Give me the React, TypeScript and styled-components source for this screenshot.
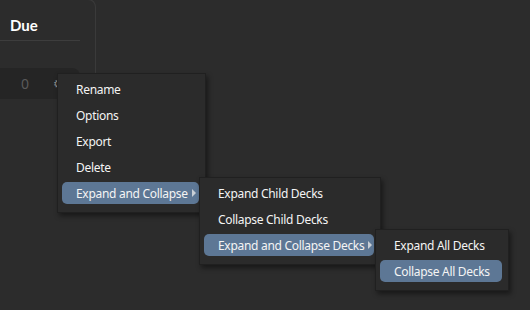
import React from "react";
import styled, { createGlobalStyle } from "styled-components";

const Global = createGlobalStyle`
  html, body { margin: 0; padding: 0; background: #2c2c2c; }
  body { width: 530px; height: 310px; overflow: hidden; font-family: "Noto Sans", "Open Sans", sans-serif; }
`;

const Page = styled.div`
  position: relative;
  width: 530px;
  height: 310px;
  background: #2c2c2c;
`;

const Card = styled.div`
  width: 96px;
  height: 180px;
  margin-top: -1px;
  border-top: 1px solid #3a3a3a;
  border-right: 1px solid #3a3a3a;
  border-top-right-radius: 8px;
  box-sizing: border-box;
  padding-right: 15px;
  display: flex;
  flex-direction: column;
`;

const Header = styled.div`
  height: 41px;
  padding: 0 0 6px 10px;
  display: flex;
  align-items: flex-end;
  color: #ffffff;
  font-family: "Lato", "Noto Sans", sans-serif;
  font-weight: 700;
  font-size: 15px;
  border-bottom: 1px solid #3d3d3d;
  box-sizing: border-box;
`;

const Row = styled.div`
  margin-top: 27px;
  height: 31px;
  background: #252525;
  border-radius: 0 8px 8px 0;
  display: flex;
  align-items: center;
  padding-left: 21px;
  gap: 24px;
  font-size: 14px;
  color: #5a5a5a;
`;

const Gear = styled.span`
  color: #8a8a8a;
  font-size: 12px;
  font-family: "DejaVu Sans", sans-serif;
`;

const Menu = styled.div<{ $x: number; $y: number; $w: number }>`
  position: absolute;
  left: ${(p) => p.$x}px;
  top: ${(p) => p.$y}px;
  width: ${(p) => p.$w}px;
  box-sizing: border-box;
  padding: 4px 6px 4px 4px;
  background: #2b2b2b;
  border: 1px solid #202020;
  box-shadow: 2px 3px 5px rgba(0, 0, 0, 0.45);
  display: flex;
  flex-direction: column;
`;

const Item = styled.div<{ $active?: boolean }>`
  height: 22px;
  margin-bottom: 4px;
  padding: 0 4px 0 14px;
  border-radius: 5px;
  display: flex;
  align-items: center;
  justify-content: space-between;
  gap: 4px;
  font-size: 12px;
  letter-spacing: -0.3px;
  color: #f4f4f4;
  white-space: nowrap;
  background: ${(p) => (p.$active ? "#5d7795" : "transparent")};
`;

const Arrow = styled.span`
  flex: none;
  width: 0;
  height: 0;
  border-top: 4px solid transparent;
  border-bottom: 4px solid transparent;
  border-left: 4px solid #c9cfd6;
`;

type Entry = { label: string; active?: boolean; sub?: boolean };

const menus: { x: number; y: number; w: number; items: Entry[] }[] = [
  {
    x: 57,
    y: 74,
    w: 149,
    items: [
      { label: "Rename" },
      { label: "Options" },
      { label: "Export" },
      { label: "Delete" },
      { label: "Expand and Collapse", active: true, sub: true },
    ],
  },
  {
    x: 199,
    y: 178,
    w: 182,
    items: [
      { label: "Expand Child Decks" },
      { label: "Collapse Child Decks" },
      { label: "Expand and Collapse Decks", active: true, sub: true },
    ],
  },
  {
    x: 375,
    y: 230,
    w: 134,
    items: [{ label: "Expand All Decks" }, { label: "Collapse All Decks", active: true }],
  },
];

export default function App() {
  return (
    <Page>
      <Global />
      <Card>
        <Header>Due</Header>
        <Row>
          <span>0</span>
          <Gear>⚙</Gear>
        </Row>
      </Card>
      {menus.map((m, i) => (
        <Menu key={i} $x={m.x} $y={m.y} $w={m.w}>
          {m.items.map((it) => (
            <Item key={it.label} $active={it.active}>
              <span>{it.label}</span>
              {it.sub && <Arrow />}
            </Item>
          ))}
        </Menu>
      ))}
    </Page>
  );
}
